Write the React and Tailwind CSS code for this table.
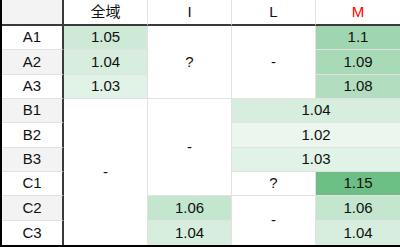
import React from 'react';

const Cell = ({ pos, bg = 'bg-white', last, edge, className = '', children }) => (
  <div
    className={`flex items-center justify-center ${pos} ${bg} ${last ? '' : 'border-b border-[#e2e2e2]'} ${
      edge ? '' : 'border-r border-r-[#e2e2e2]'
    } ${className}`}
  >
    {children}
  </div>
);

const Label = ({ row, gray, last, children }) => (
  <div
    className={`flex items-center justify-center col-start-1 ${row} ${gray ? 'bg-[#f3f3f3]' : 'bg-white'} border-r-2 border-r-[#3a3a3a] ${
      last ? '' : 'border-b border-b-[#e2e2e2]'
    }`}
  >
    {children}
  </div>
);

export default function App() {
  return (
    <div
      className="w-[400px] h-[247px] border-l-2 border-b-2 border-black bg-white text-[15px] text-[#111]"
      style={{ fontFamily: '"Liberation Sans", Arial, "Noto Sans CJK SC", sans-serif' }}
    >
      <div className="grid grid-cols-[62px_84px_84px_84px_84px] grid-rows-[26px_24px_25px_24px_24px_25px_24px_24px_25px_24px]">
        {/* header */}
        <div className="col-start-1 row-start-1 bg-[#f3f3f3] border-r-2 border-r-[#3a3a3a] border-b-2 border-b-[#3a3a3a]" />
        <div className="col-start-2 row-start-1 flex items-center justify-center border-b-2 border-b-[#3a3a3a] border-r border-r-[#e2e2e2]">全域</div>
        <div className="col-start-3 row-start-1 flex items-center justify-center border-b-2 border-b-[#3a3a3a] border-r border-r-[#e2e2e2]">I</div>
        <div className="col-start-4 row-start-1 flex items-center justify-center border-b-2 border-b-[#3a3a3a] border-r border-r-[#e2e2e2]">L</div>
        <div className="col-start-5 row-start-1 flex items-center justify-center border-b-2 border-b-[#3a3a3a] text-[#ff0000]">M</div>

        {/* row labels */}
        <Label row="row-start-2">A1</Label>
        <Label row="row-start-3" gray>A2</Label>
        <Label row="row-start-4">A3</Label>
        <Label row="row-start-5" gray>B1</Label>
        <Label row="row-start-6">B2</Label>
        <Label row="row-start-7" gray>B3</Label>
        <Label row="row-start-8">C1</Label>
        <Label row="row-start-9" gray>C2</Label>
        <Label row="row-start-10" last>C3</Label>

        {/* 全域 */}
        <Cell pos="col-start-2 row-start-2" bg="bg-[#ceead6]">1.05</Cell>
        <Cell pos="col-start-2 row-start-3" bg="bg-[#d7eede]">1.04</Cell>
        <Cell pos="col-start-2 row-start-4" bg="bg-[#e1f2e6]">1.03</Cell>
        <Cell pos="col-start-2 row-start-5 row-span-6" last>-</Cell>

        {/* I */}
        <Cell pos="col-start-3 row-start-2 row-span-3">?</Cell>
        <Cell pos="col-start-3 row-start-5 row-span-4">-</Cell>
        <Cell pos="col-start-3 row-start-9" bg="bg-[#c4e5ce]">1.06</Cell>
        <Cell pos="col-start-3 row-start-10" bg="bg-[#d7eede]" last>1.04</Cell>

        {/* L */}
        <Cell pos="col-start-4 row-start-2 row-span-3">-</Cell>
        <Cell pos="col-start-4 col-span-2 row-start-5" bg="bg-[#d7eede]" edge>1.04</Cell>
        <Cell pos="col-start-4 col-span-2 row-start-6" bg="bg-[#ebf6ef]" edge>1.02</Cell>
        <Cell pos="col-start-4 col-span-2 row-start-7" bg="bg-[#e1f2e6]" edge>1.03</Cell>
        <Cell pos="col-start-4 row-start-8">?</Cell>
        <Cell pos="col-start-4 row-start-9 row-span-2" last>-</Cell>

        {/* M */}
        <Cell pos="col-start-5 row-start-2" bg="bg-[#9fd5b0]" edge>1.1</Cell>
        <Cell pos="col-start-5 row-start-3" bg="bg-[#a8dab7]" edge>1.09</Cell>
        <Cell pos="col-start-5 row-start-4" bg="bg-[#b2debf]" edge>1.08</Cell>
        <Cell pos="col-start-5 row-start-8" bg="bg-[#6cbf84]" edge>1.15</Cell>
        <Cell pos="col-start-5 row-start-9" bg="bg-[#c4e5ce]" edge>1.06</Cell>
        <Cell pos="col-start-5 row-start-10" bg="bg-[#d7eede]" edge last>1.04</Cell>
      </div>
    </div>
  );
}
